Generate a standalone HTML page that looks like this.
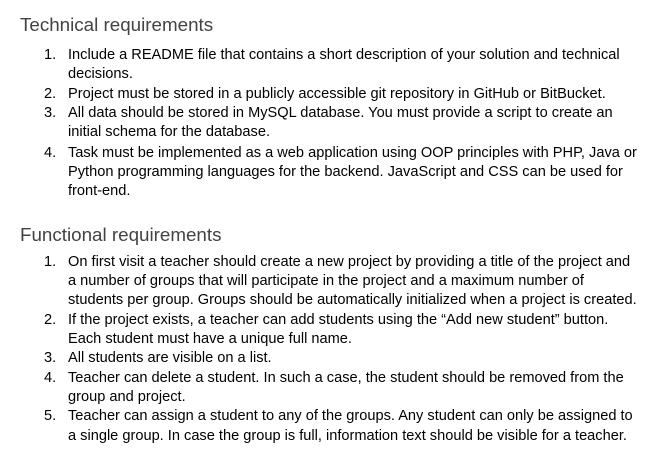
<!DOCTYPE html>
<html><head><meta charset="utf-8"><style>
body{margin:0;background:#fff;width:661px;height:471px;position:relative;overflow:hidden;font-family:"Liberation Sans",Arial,sans-serif;}
.h{position:absolute;left:20px;font-size:18.8px;color:#434343;line-height:24px;white-space:nowrap}
.l{position:absolute;left:68px;font-size:14.6px;color:#000;line-height:18px;white-space:nowrap}
.n{position:absolute;left:44px;font-size:14.6px;color:#000;line-height:18px}
</style></head><body>
<div class="h" style="top:13px">Technical requirements</div>
<div class="n" style="top:46px">1.</div><div class="l" style="top:46px">Include a README file that contains a short description of your solution and technical</div>
<div class="l" style="top:65px">decisions.</div>
<div class="n" style="top:85px">2.</div><div class="l" style="top:85px">Project must be stored in a publicly accessible git repository in GitHub or BitBucket.</div>
<div class="n" style="top:104px">3.</div><div class="l" style="top:104px">All data should be stored in MySQL database. You must provide a script to create an</div>
<div class="l" style="top:123px">initial schema for the database.</div>
<div class="n" style="top:144px">4.</div><div class="l" style="top:144px">Task must be implemented as a web application using OOP principles with PHP, Java or</div>
<div class="l" style="top:163px">Python programming languages for the backend. JavaScript and CSS can be used for</div>
<div class="l" style="top:182px">front-end.</div>
<div class="h" style="top:223px">Functional requirements</div>
<div class="n" style="top:253px">1.</div><div class="l" style="top:253px">On first visit a teacher should create a new project by providing a title of the project and</div>
<div class="l" style="top:272px">a number of groups that will participate in the project and a maximum number of</div>
<div class="l" style="top:291px">students per group. Groups should be automatically initialized when a project is created.</div>
<div class="n" style="top:311px">2.</div><div class="l" style="top:311px">If the project exists, a teacher can add students using the “Add new student” button.</div>
<div class="l" style="top:330px">Each student must have a unique full name.</div>
<div class="n" style="top:349px">3.</div><div class="l" style="top:349px">All students are visible on a list.</div>
<div class="n" style="top:369px">4.</div><div class="l" style="top:369px">Teacher can delete a student. In such a case, the student should be removed from the</div>
<div class="l" style="top:388px">group and project.</div>
<div class="n" style="top:407px">5.</div><div class="l" style="top:407px">Teacher can assign a student to any of the groups. Any student can only be assigned to</div>
<div class="l" style="top:427px">a single group. In case the group is full, information text should be visible for a teacher.</div>
</body></html>
